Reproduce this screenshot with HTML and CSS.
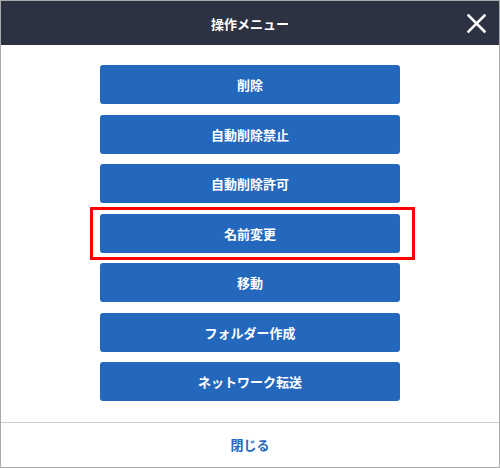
FILE: index.html
```html
<!DOCTYPE html>
<html lang="ja">
<head>
<meta charset="utf-8">
<link rel="stylesheet" href="styles.css">
</head>
<body>
<div class="dialog">
  <header class="dialog-header">
    <span></span>
    <h1 class="dialog-title">操作メニュー</h1>
    <button class="close-btn" aria-label="閉じる">
      <svg width="19" height="19" viewBox="0 0 19 19"><path d="M1.5 1.5 L17.5 17.5 M17.5 1.5 L1.5 17.5" stroke="#fff" stroke-width="2.6" stroke-linecap="square" fill="none"/></svg>
    </button>
  </header>
  <main class="dialog-body">
    <button class="menu-btn">削除</button>
    <button class="menu-btn">自動削除禁止</button>
    <button class="menu-btn">自動削除許可</button>
    <div class="highlight"><button class="menu-btn">名前変更</button></div>
    <button class="menu-btn">移動</button>
    <button class="menu-btn">フォルダー作成</button>
    <button class="menu-btn">ネットワーク転送</button>
  </main>
  <footer class="dialog-footer">
    <button class="close-link">閉じる</button>
  </footer>
</div>
</body>
</html>
```
FILE: styles.css
```css
* { box-sizing: border-box; }
body {
  margin: 0;
  font-family: "Noto Sans CJK JP", "Noto Sans", sans-serif;
  background: #fff;
}
.dialog {
  width: 500px;
  height: 468px;
  border: 1px solid #aaaaaa;
  display: flex;
  flex-direction: column;
  background: #fff;
}
.dialog-header {
  height: 44px;
  background: #2d3243;
  display: grid;
  grid-template-columns: 1fr auto 1fr;
  align-items: center;
}
.dialog-title {
  margin: 0;
  color: #fff;
  font-size: 13px;
  font-weight: 700;
  line-height: 1;
}
.close-btn {
  justify-self: end;
  margin-right: 13px;
  padding: 0;
  border: 0;
  background: none;
  width: 19px;
  height: 19px;
  display: flex;
}
.dialog-body {
  flex: 1;
  padding: 20px 0 21px;
  display: flex;
  flex-direction: column;
  align-items: center;
  gap: 10.5px;
}
.menu-btn {
  width: 300px;
  height: 39px;
  border: 0;
  border-radius: 3px;
  background: #2368bd;
  color: #fff;
  font-family: inherit;
  font-size: 13px;
  font-weight: 700;
  padding: 0;
  display: block;
}
.highlight {
  position: relative;
}
.highlight::after {
  content: "";
  position: absolute;
  left: -10px;
  right: -15px;
  top: -6.5px;
  bottom: -7.5px;
  border: 3px solid #f00;
  pointer-events: none;
}
.dialog-footer {
  height: 45px;
  border-top: 1px solid #cccccc;
  display: flex;
  align-items: center;
  justify-content: center;
  padding-bottom: 2px;
}
.close-link {
  border: 0;
  background: none;
  padding: 0;
  color: #2368bd;
  font-family: inherit;
  font-size: 13px;
  font-weight: 700;
  line-height: 1;
}
```
